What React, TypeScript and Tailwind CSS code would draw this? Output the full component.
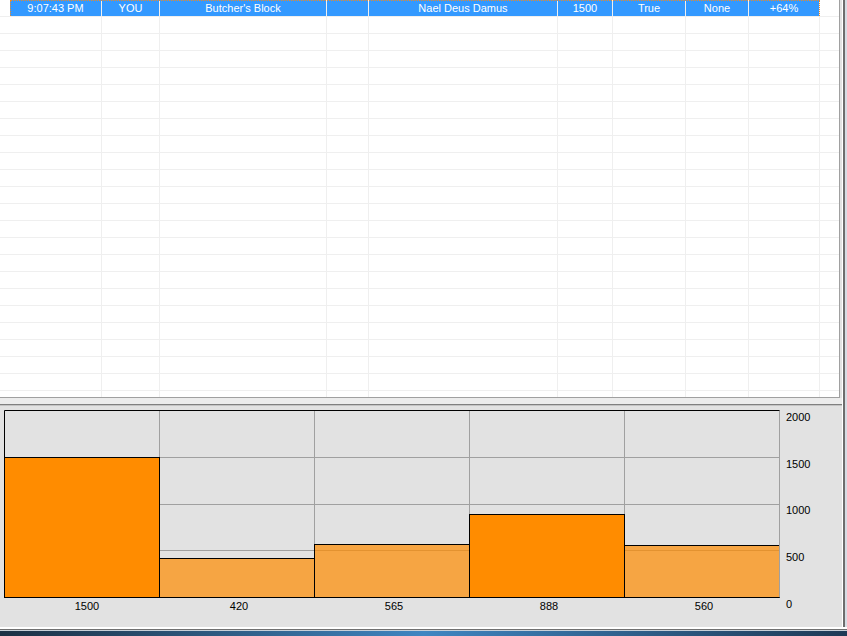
import React from "react";

type Col = { cls: string; text: string; line: boolean; sel: boolean };

const columns: Col[] = [
  { cls: "w-[10px]", text: "", line: false, sel: false },
  { cls: "w-[92px]", text: "9:07:43 PM", line: true, sel: true },
  { cls: "w-[58px]", text: "YOU", line: true, sel: true },
  { cls: "w-[167px]", text: "Butcher's Block", line: true, sel: true },
  { cls: "w-[42px]", text: "", line: true, sel: true },
  { cls: "w-[189px]", text: "Nael Deus Damus", line: true, sel: true },
  { cls: "w-[55px]", text: "1500", line: true, sel: true },
  { cls: "w-[73px]", text: "True", line: true, sel: true },
  { cls: "w-[63px]", text: "None", line: true, sel: true },
  { cls: "w-[71px]", text: "+64%", line: true, sel: true },
  { cls: "w-[19px]", text: "", line: false, sel: false },
];

const bars = [
  { value: 1500, strong: true, labelX: 87 },
  { value: 420, strong: false, labelX: 239 },
  { value: 565, strong: false, labelX: 394 },
  { value: 888, strong: true, labelX: 549 },
  { value: 560, strong: false, labelX: 704 },
];

const FONT = "'Liberation Sans', Arial, sans-serif";

function GridRow({ selected }: { selected: boolean }) {
  return (
    <div className="relative flex h-[17px] shrink-0 border-b border-[#efefef]">
      {columns.map((c, i) => (
        <div
          key={i}
          className={`${c.cls} flex h-full shrink-0 items-center justify-center overflow-hidden whitespace-nowrap ${
            c.line ? "border-r border-[#efefef]" : ""
          } ${selected && c.sel ? "bg-[#3399ff] text-white" : ""}`}
        >
          {selected ? c.text : ""}
        </div>
      ))}
      {selected && (
        <div className="absolute left-[10px] top-0 h-[16px] w-[810px] border-l border-r border-t border-dotted border-[#f08a24]" />
      )}
    </div>
  );
}

function Chart() {
  const left = 4.5;
  const colW = 155;
  const top = 4.5;
  const bottom = 191.5;
  const plotH = bottom - top;
  const right = left + colW * 5;
  const gridY = [51.5, 98.5, 144.5];
  const yLabels = [
    { t: "2000", y: 15 },
    { t: "1500", y: 62 },
    { t: "1000", y: 108 },
    { t: "500", y: 155 },
    { t: "0", y: 202 },
  ];

  return (
    <svg width="842" height="221" className="block">
      <rect x={left} y={top} width={colW * 5} height={plotH} fill="#e2e2e2" />
      {gridY.map((y) => (
        <line key={y} x1={left} x2={right} y1={y} y2={y} stroke="#a0a0a0" />
      ))}
      {[1, 2, 3, 4].map((i) => (
        <line
          key={i}
          x1={left + colW * i}
          x2={left + colW * i}
          y1={top}
          y2={bottom}
          stroke="#a0a0a0"
        />
      ))}
      {bars.map((b, i) => {
        const h = (b.value / 2000) * plotH;
        const y = Math.round(bottom - h - 0.5) + 0.5;
        return (
          <g key={i}>
            <rect
              x={left + colW * i}
              y={y}
              width={colW}
              height={bottom - y}
              fill="#ff8c00"
              fillOpacity={b.strong ? 1 : 0.7}
            />
            <rect
              x={left + colW * i}
              y={y}
              width={colW}
              height={bottom - y}
              fill="none"
              stroke="#000"
            />
          </g>
        );
      })}
      <line x1={right} x2={right} y1={top} y2={bottom} stroke="#a0a0a0" />
      <line x1={left} x2={right} y1={top} y2={top} stroke="#000" />
      <line x1={left} x2={left} y1={top} y2={bottom} stroke="#000" />
      <line x1={left} x2={right} y1={bottom} y2={bottom} stroke="#000" />
      {yLabels.map((l) => (
        <text key={l.t} x={786} y={l.y} fontSize="11" fontFamily={FONT} fill="#000">
          {l.t}
        </text>
      ))}
      {bars.map((b) => (
        <text
          key={b.labelX}
          x={b.labelX}
          y={204}
          fontSize="11"
          fontFamily={FONT}
          textAnchor="middle"
          fill="#000"
        >
          {b.value}
        </text>
      ))}
    </svg>
  );
}

export default function App() {
  return (
    <div
      className="flex h-[636px] w-[847px] flex-col overflow-hidden bg-[#e2e2e2] text-[11px]"
      style={{ fontFamily: FONT }}
    >
      <div className="flex h-[627px] shrink-0">
        <div className="flex w-[842px] shrink-0 flex-col">
          <div className="flex h-[398px] w-[840px] shrink-0 flex-col overflow-hidden border-b border-r border-[#a0a0a0] bg-white">
            {Array.from({ length: 24 }).map((_, i) => (
              <GridRow key={i} selected={i === 0} />
            ))}
          </div>
          <div className="h-[6px] shrink-0 bg-[#ececec]" />
          <div className="h-[1px] shrink-0 bg-[#808080]" />
          <div className="h-[1px] shrink-0 bg-[#c4c4c4]" />
          <div className="flex-1 bg-[#e2e2e2]">
            <Chart />
          </div>
        </div>
        <div className="flex shrink-0">
          <div className="w-[1px] bg-white" />
          <div className="w-[2px] bg-[#6d6d6d]" />
          <div className="w-[2px] bg-[#d6dce3]" />
        </div>
      </div>
      <div className="h-[2px] shrink-0 bg-white" />
      <div className="h-[1px] shrink-0 bg-[#707070]" />
      <div className="h-[1px] shrink-0 bg-[#c8d0d8]" />
      <div className="flex-1 bg-gradient-to-r from-[#1b3044] via-[#3f86c2] to-[#1e3a56]" />
    </div>
  );
}
